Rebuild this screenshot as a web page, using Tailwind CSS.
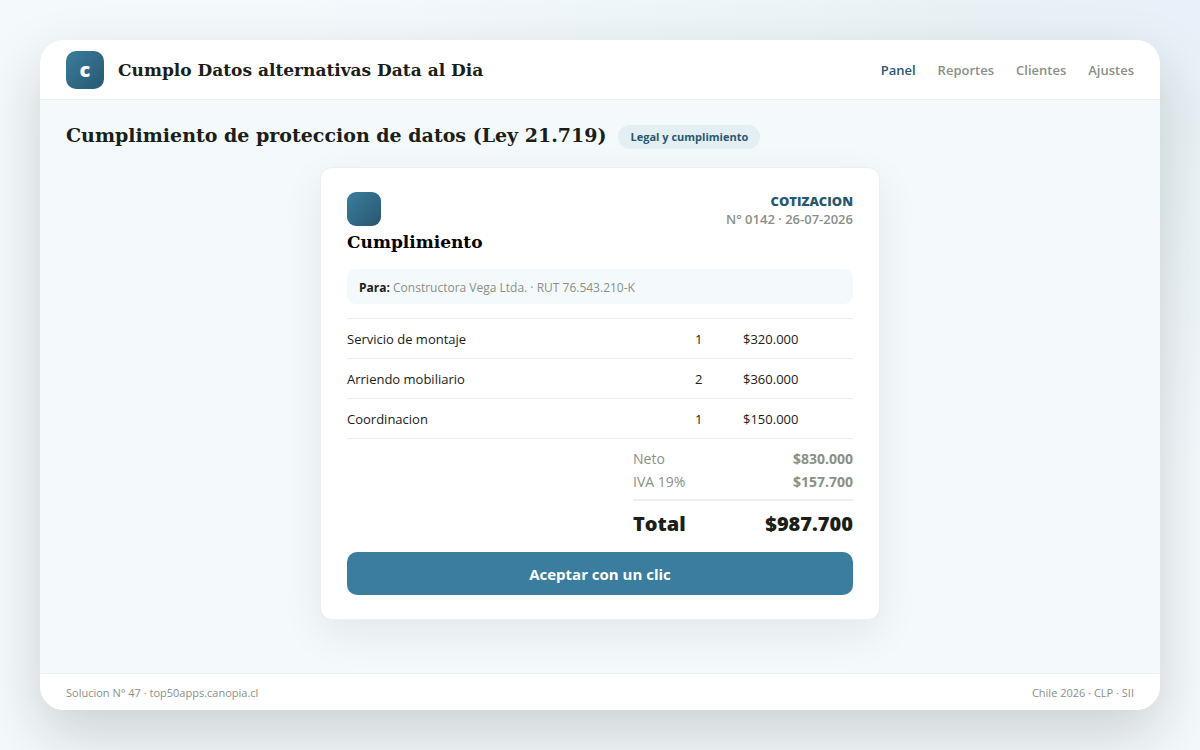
<!DOCTYPE html>
<html lang="es">
<head>
    <meta charset="UTF-8">
    <meta name="viewport" content="width=device-width, initial-scale=1.0">
    <title>Cumplo Datos alternativas Data al Dia</title>
    <script src="https://cdn.jsdelivr.net/npm/@tailwindcss/browser@4"></script>
</head>
<body class="flex min-h-screen p-10 bg-[radial-gradient(120%_100%_at_100%_0%,#e8f1fa_0%,#e8f2f5_16%,#f4f9fc_62%)] font-['Segoe_UI','Open_Sans',sans-serif] text-[#1a2018]">

    <div class="flex flex-1 flex-col overflow-hidden rounded-3xl bg-[#f4f9fc] shadow-[0_24px_60px_rgba(22,26,24,0.18)]">

        <!-- Top bar -->
        <header class="flex items-center justify-between border-b border-[#ecefec] bg-white px-[26px] h-[60px]">
            <div class="flex items-center gap-[14px]">
                <div class="flex size-[38px] items-center justify-center rounded-[10px] bg-linear-135 from-[#3a7d9e] to-[#28586f] text-xl font-extrabold text-white">c</div>
                <p class="pt-0.5 font-[Georgia,'DejaVu_Serif',serif] text-[17px] font-bold">Cumplo Datos alternativas Data al Dia</p>
            </div>
            <nav class="flex gap-[22px] pt-0.5 text-[13px] font-semibold text-[#8a9087]">
                <a href="#" class="text-[#28586f]">Panel</a>
                <a href="#">Reportes</a>
                <a href="#">Clientes</a>
                <a href="#">Ajustes</a>
            </nav>
        </header>

        <main class="flex-1 px-[26px] pt-5">
            <div class="flex items-center gap-3">
                <h1 class="font-[Georgia,'DejaVu_Serif',serif] text-[19px] font-bold leading-[30px]">Cumplimiento de proteccion de datos (Ley 21.719)</h1>
                <span class="mt-1 rounded-full bg-[#e4eff4] px-3 text-[11px] font-bold leading-6 text-[#28586f]">Legal y cumplimiento</span>
            </div>

            <!-- Quote -->
            <section class="mx-auto mt-[17px] max-w-[560px] rounded-xl border border-[#ecefec] bg-white px-[26px] py-6 shadow-[0_14px_40px_rgba(22,26,24,0.08)]">
                <div class="flex justify-between">
                    <div>
                        <div class="size-[34px] rounded-[9px] bg-linear-135 from-[#3a7d9e] to-[#28586f]"></div>
                        <h2 class="mt-1 font-[Georgia,'DejaVu_Serif',serif] text-[17px] font-bold leading-6 text-black">Cumplimiento</h2>
                    </div>
                    <div class="text-right text-[13px] leading-[18px]">
                        <p class="font-extrabold text-[#28586f]">COTIZACION</p>
                        <p class="font-semibold text-[#8a9087]">N° 0142 · 26-07-2026</p>
                    </div>
                </div>

                <p class="mt-[15px] rounded-[9px] bg-[#f4f9fc] px-3 pt-0.5 text-[12px] leading-[33px] text-[#8a9087]"><b class="text-[#1a2018]">Para:</b> Constructora Vega Ltda. · RUT 76.543.210-K</p>

                <table class="mt-[14px] w-full table-fixed border-t border-[#ecefec] text-[13px]">
                    <colgroup>
                        <col>
                        <col class="w-12">
                        <col class="w-[110px]">
                    </colgroup>
                    <tbody>
                        <tr class="h-10 border-b border-[#ecefec]"><td class="pt-0.5">Servicio de montaje</td><td class="pt-0.5">1</td><td class="pt-0.5">$320.000</td></tr>
                        <tr class="h-10 border-b border-[#ecefec]"><td class="pt-0.5">Arriendo mobiliario</td><td class="pt-0.5">2</td><td class="pt-0.5">$360.000</td></tr>
                        <tr class="h-10 border-b border-[#ecefec]"><td class="pt-0.5">Coordinacion</td><td class="pt-0.5">1</td><td class="pt-0.5">$150.000</td></tr>
                    </tbody>
                </table>

                <dl class="ml-auto mt-2 w-[220px] text-[14px] leading-[23px] text-[#8a9087]">
                    <div class="flex justify-between"><dt>Neto</dt><dd class="font-bold">$830.000</dd></div>
                    <div class="flex justify-between"><dt>IVA 19%</dt><dd class="font-bold">$157.700</dd></div>
                    <div class="mt-1.5 flex justify-between border-t-2 border-[#ecefec] pt-2 text-xl font-extrabold leading-[30px] text-[#1a2018]"><dt>Total</dt><dd>$987.700</dd></div>
                </dl>

                <button type="button" class="mt-[13px] block h-[43px] w-full rounded-[10px] bg-[#3a7d9e] pt-0.5 text-[15px] font-bold text-white">Aceptar con un clic</button>
            </section>
        </main>

        <footer class="flex justify-between border-t border-[#ecefec] bg-white px-[26px] pt-0.5 text-[11px] leading-[34px] text-[#8a9087]">
            <p>Solucion N° 47 · top50apps.canopia.cl</p>
            <p>Chile 2026 · CLP · SII</p>
        </footer>
    </div>

</body>
</html>
